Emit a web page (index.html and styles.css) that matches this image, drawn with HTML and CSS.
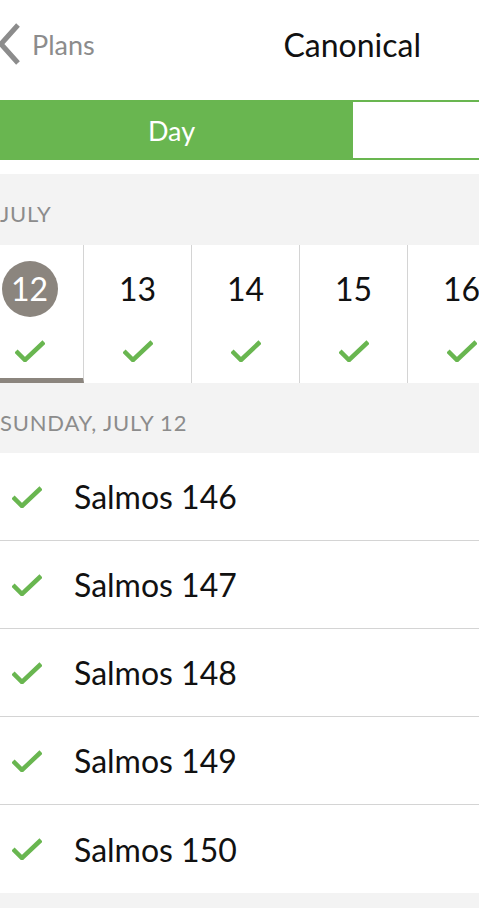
FILE: index.html
```html
<!DOCTYPE html>
<html>
<head>
<meta charset="utf-8">
<link rel="stylesheet" href="styles.css">
</head>
<body>
<header class="header">
  <div class="back">
    <svg class="chev" width="20" height="42" viewBox="0 0 20 42"><path d="M18 2 L1 21 L18 40" fill="none" stroke="#8c8c8c" stroke-width="5"/></svg>
    <span>Plans</span>
  </div>
  <div class="title">Canonical</div>
</header>
<div class="segment">
  <div class="seg seg-on">Day</div>
  <div class="seg seg-off"></div>
</div>
<div class="section-label month">JULY</div>
<div class="days">
  <div class="day active"><div class="num circle">12</div><svg class="check" viewBox="0 0 30 22"><path d="M1 11 L10 20 L29 2" fill="none" stroke="#69b650" stroke-width="4.5"/></svg></div>
  <div class="day"><div class="num">13</div><svg class="check" viewBox="0 0 30 22"><path d="M1 11 L10 20 L29 2" fill="none" stroke="#69b650" stroke-width="4.5"/></svg></div>
  <div class="day"><div class="num">14</div><svg class="check" viewBox="0 0 30 22"><path d="M1 11 L10 20 L29 2" fill="none" stroke="#69b650" stroke-width="4.5"/></svg></div>
  <div class="day"><div class="num">15</div><svg class="check" viewBox="0 0 30 22"><path d="M1 11 L10 20 L29 2" fill="none" stroke="#69b650" stroke-width="4.5"/></svg></div>
  <div class="day"><div class="num">16</div><svg class="check" viewBox="0 0 30 22"><path d="M1 11 L10 20 L29 2" fill="none" stroke="#69b650" stroke-width="4.5"/></svg></div>
</div>
<div class="section-label date">SUNDAY, JULY 12</div>
<ul class="list">
  <li class="item"><svg class="check" viewBox="0 0 30 22"><path d="M1 11 L10 20 L29 2" fill="none" stroke="#69b650" stroke-width="4.5"/></svg><span>Salmos 146</span></li>
  <li class="item"><svg class="check" viewBox="0 0 30 22"><path d="M1 11 L10 20 L29 2" fill="none" stroke="#69b650" stroke-width="4.5"/></svg><span>Salmos 147</span></li>
  <li class="item"><svg class="check" viewBox="0 0 30 22"><path d="M1 11 L10 20 L29 2" fill="none" stroke="#69b650" stroke-width="4.5"/></svg><span>Salmos 148</span></li>
  <li class="item"><svg class="check" viewBox="0 0 30 22"><path d="M1 11 L10 20 L29 2" fill="none" stroke="#69b650" stroke-width="4.5"/></svg><span>Salmos 149</span></li>
  <li class="item last"><svg class="check" viewBox="0 0 30 22"><path d="M1 11 L10 20 L29 2" fill="none" stroke="#69b650" stroke-width="4.5"/></svg><span>Salmos 150</span></li>
</ul>
<div class="footer"></div>
</body>
</html>
```
FILE: styles.css
```css
* { box-sizing: border-box; }
html, body { margin: 0; padding: 0; }
body {
  width: 479px;
  height: 908px;
  overflow: hidden;
  background: #fff;
  font-family: Lato, "Noto Sans", sans-serif;
  color: #111;
}
.header {
  height: 100px;
  display: flex;
  align-items: center;
  padding-bottom: 12px;
}
.back {
  display: flex;
  align-items: center;
  gap: 12px;
  color: #8c8c8c;
  font-size: 27px;
}
.chev { display: block; }
.title {
  margin-left: auto;
  margin-right: 58px;
  font-size: 32px;
  color: #111;
}
.segment {
  display: flex;
  height: 60px;
}
.seg-on {
  width: 353px;
  background: #69b650;
  color: #fff;
  font-size: 27px;
  display: flex;
  align-items: center;
  justify-content: center;
  padding-right: 10px;
}
.seg-off {
  flex: 1;
  border-top: 2px solid #69b650;
  border-bottom: 2px solid #69b650;
  background: #fff;
}
.section-label {
  background: #f3f3f3;
  color: #8c8c8c;
  font-size: 22px;
  letter-spacing: 0.8px;
  display: flex;
  align-items: center;
}
.month { height: 71px; margin-top: 14px; padding-top: 8px; }
.date { height: 70px; padding-top: 8px; }
.days {
  display: flex;
  height: 138px;
  margin-left: -24px;
}
.day {
  flex: 0 0 108px;
  border-right: 1px solid #d4d4d4;
  display: flex;
  flex-direction: column;
  align-items: center;
  padding-top: 16px;
}
.day.active {
  border-bottom: 5px solid #8b857e;
}
.num {
  width: 56px;
  height: 56px;
  line-height: 56px;
  text-align: center;
  font-size: 32px;
  color: #111;
}
.circle {
  background: #8b857e;
  color: #fff;
  border-radius: 50%;
}
.day .check {
  width: 30px;
  height: 22px;
  margin-top: 23px;
}
.list { list-style: none; margin: 0; padding: 0; }
.item {
  height: 88px;
  border-bottom: 1px solid #d4d4d4;
  display: flex;
  align-items: center;
  padding-left: 12px;
  font-size: 32px;
}
.item.last { border-bottom: none; }
.item .check {
  width: 30px;
  height: 22px;
  margin-right: 32px;
}
.footer {
  height: 20px;
  background: #f3f3f3;
}
```
